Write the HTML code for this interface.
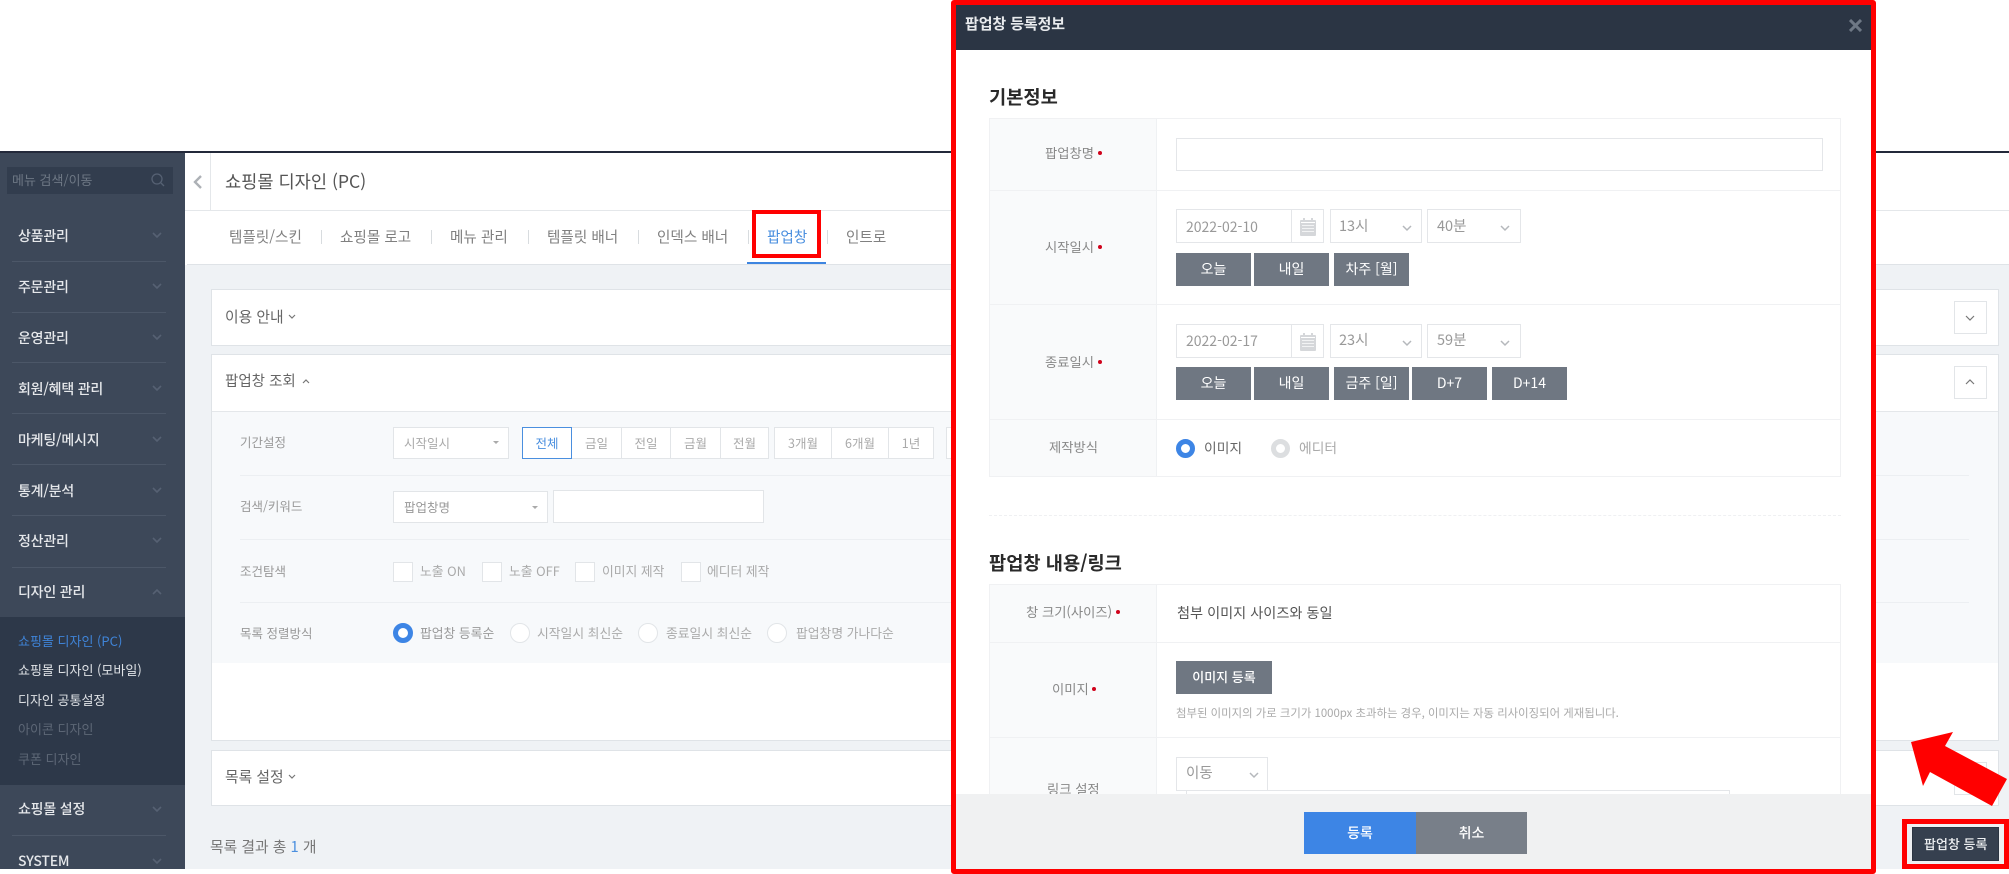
<!DOCTYPE html>
<html lang="ko"><head><meta charset="utf-8"><title>팝업창 등록정보</title>
<style>
*{box-sizing:border-box;margin:0;padding:0}
html,body{width:2009px;height:874px;background:#fff;overflow:hidden}
body{position:relative;font-family:"Liberation Sans","Noto Sans CJK KR",sans-serif;filter:blur(.35px)}
.k{font-family:"Noto Sans CJK KR","Liberation Sans",sans-serif}
div{position:absolute}
.t{position:absolute;white-space:nowrap;line-height:20px;height:20px;font-family:"Noto Sans CJK KR","Liberation Sans",sans-serif}
.m{color:#e6e8eb;font-size:14px;font-weight:500;left:18px;letter-spacing:-.2px}
.sep{left:12px;width:154px;height:1px;background:#4c5768}
.sub{color:#dfe2e6;font-size:13px;left:18px}
.tab{color:#808080;font-size:14.6px;top:227px}
.td{width:1px;height:14px;top:230px;background:#d8dcdf}
.pn{left:211px;width:1788px;background:#fff;border:1px solid #dfe3e7}
.lb{color:#999;font-size:12.5px;left:240px}
.box{background:#fff;border:1px solid #e2e5e8}
.sb{top:427px;height:32px;background:#fff;border:1px solid #e2e5e8;color:#aaa;font-size:12.5px;text-align:center;line-height:30px;font-family:"Noto Sans CJK KR",sans-serif}
.cb{width:20px;height:20px;background:#fff;border:1px solid #e2e5e8;top:562px}
.gt{color:#aaa;font-size:12.8px}
.rd{width:20px;height:20px;border-radius:50%;background:#fff;border:1px solid #e2e5e8;top:623px}
.ml{color:#888;font-size:13.3px;text-align:center}
.dot{width:4px;height:4px;border-radius:50%;background:#d0021b}
.ln{background:#f0f1f3;height:1px}
.gb{background:#6f7782;color:#fff;font-size:14px;text-align:center;line-height:32px;font-family:"Noto Sans CJK KR",sans-serif;height:33px;width:75px}
.sel{background:#fff;border:1px solid #e4e6e9}
.v{color:#999;font-size:14.5px}
</style></head><body>

<!-- top rule -->
<div style="left:0;top:151px;width:2009px;height:2px;background:#23293a"></div>

<!-- sidebar -->
<div style="left:0;top:153px;width:185px;height:716px;background:#3d4859"></div>
<div style="left:7px;top:167px;width:166px;height:27px;background:#323d4e"></div>
<span class="t" style="left:12px;top:170px;font-size:13px;color:#6d7784">메뉴 검색/이동</span>

<span class="t m" style="top:226px">상품관리</span><div class="sep" style="top:261px"></div>
<span class="t m" style="top:277px">주문관리</span><div class="sep" style="top:312px"></div>
<span class="t m" style="top:328px">운영관리</span><div class="sep" style="top:362px"></div>
<span class="t m" style="top:379px">회원/혜택 관리</span><div class="sep" style="top:413px"></div>
<span class="t m" style="top:430px">마케팅/메시지</span><div class="sep" style="top:464px"></div>
<span class="t m" style="top:481px">통계/분석</span><div class="sep" style="top:515px"></div>
<span class="t m" style="top:531px">정산관리</span><div class="sep" style="top:567px"></div>
<span class="t m" style="top:582px">디자인 관리</span>

<div style="left:0;top:617px;width:185px;height:168px;background:#2d3849"></div>
<span class="t sub" style="top:631px;color:#3f84d8">쇼핑몰 디자인 (PC)</span>
<span class="t sub" style="top:660px">쇼핑몰 디자인 (모바일)</span>
<span class="t sub" style="top:690px">디자인 공통설정</span>
<span class="t sub" style="top:719px;color:#5d6776">아이콘 디자인</span>
<span class="t sub" style="top:749px;color:#5d6776">쿠폰 디자인</span>

<span class="t m" style="top:799px">쇼핑몰 설정</span><div class="sep" style="top:835px"></div>
<span class="t m" style="top:851px">SYSTEM</span>

<!-- main bg -->
<div style="left:185px;top:153px;width:1824px;height:716px;background:#eff2f5"></div>
<div style="left:185px;top:153px;width:1824px;height:112px;background:#fff"></div>
<div style="left:185px;top:210px;width:1824px;height:1px;background:#e4e7ea"></div>
<div style="left:187px;top:264px;width:1822px;height:1px;background:#dfe3e7"></div>
<div style="left:210px;top:153px;width:1px;height:57px;background:#e4e7ea"></div>

<span class="t" style="left:225px;top:172px;font-size:17.6px;color:#555">쇼핑몰 디자인 (PC)</span>

<span class="t tab" style="left:229px">템플릿/스킨</span><div class="td" style="left:321px"></div>
<span class="t tab" style="left:340px">쇼핑몰 로고</span><div class="td" style="left:431px"></div>
<span class="t tab" style="left:450px">메뉴 관리</span><div class="td" style="left:528px"></div>
<span class="t tab" style="left:547px">템플릿 배너</span><div class="td" style="left:638px"></div>
<span class="t tab" style="left:657px">인덱스 배너</span><div class="td" style="left:748px"></div>
<span class="t tab" style="left:767px;color:#4a8fdf">팝업창</span><div class="td" style="left:827px"></div>
<span class="t tab" style="left:846px">인트로</span>
<div style="left:747px;top:262px;width:79px;height:2px;background:#3d85e0"></div>

<!-- panels -->
<div class="pn" style="top:289px;height:57px"></div>
<span class="t" style="left:225px;top:307px;font-size:14.8px;color:#666">이용 안내</span>
<div class="box" style="left:1954px;top:301px;width:33px;height:33px"></div>

<div class="pn" style="top:354px;height:387px"></div>
<span class="t" style="left:225px;top:371px;font-size:14.5px;color:#666">팝업창 조회</span>
<div class="box" style="left:1954px;top:366px;width:33px;height:33px"></div>
<div style="left:212px;top:411px;width:1786px;height:252px;background:#f7f9fb;border-top:1px solid #e4e7ea"></div>

<div class="ln" style="left:240px;top:475px;width:1729px;background:#eceff2"></div>
<div class="ln" style="left:240px;top:539px;width:1729px;background:#eceff2"></div>
<div class="ln" style="left:240px;top:602px;width:1729px;background:#eceff2"></div>

<span class="t lb" style="top:432px">기간설정</span>
<span class="t lb" style="top:496px">검색/키워드</span>
<span class="t lb" style="top:561px">조건탐색</span>
<span class="t lb" style="top:623px">목록 정렬방식</span>

<div class="sb" style="left:393px;width:116px;text-align:left;padding-left:10px">시작일시</div>
<div class="sb" style="left:522px;width:50px;border:1px solid #4a8fdf;color:#4a8fdf;z-index:1">전체</div>
<div class="sb" style="left:571px;width:51px">금일</div>
<div class="sb" style="left:621px;width:50px">전일</div>
<div class="sb" style="left:670px;width:51px">금월</div>
<div class="sb" style="left:720px;width:49px">전월</div>
<div class="sb" style="left:774px;width:58px">3개월</div>
<div class="sb" style="left:831px;width:58px">6개월</div>
<div class="sb" style="left:888px;width:46px">1년</div>
<div class="sb" style="left:946px;width:46px"></div>

<div class="sb" style="left:393px;top:491px;width:155px;text-align:left;padding-left:10px;color:#999">팝업창명</div>
<div class="box" style="left:553px;top:490px;width:211px;height:33px"></div>

<div class="cb" style="left:393px"></div><span class="t gt" style="left:420px;top:561px">노출 ON</span>
<div class="cb" style="left:482px"></div><span class="t gt" style="left:509px;top:561px">노출 OFF</span>
<div class="cb" style="left:575px"></div><span class="t gt" style="left:602px;top:561px">이미지 제작</span>
<div class="cb" style="left:681px"></div><span class="t gt" style="left:707px;top:561px">에디터 제작</span>

<div class="rd" style="left:393px;border:5px solid #3d85e5"></div><span class="t gt" style="left:420px;top:623px;color:#999">팝업창 등록순</span>
<div class="rd" style="left:510px"></div><span class="t gt" style="left:537px;top:623px">시작일시 최신순</span>
<div class="rd" style="left:638px"></div><span class="t gt" style="left:666px;top:623px">종료일시 최신순</span>
<div class="rd" style="left:767px"></div><span class="t gt" style="left:796px;top:623px">팝업창명 가나다순</span>

<div class="pn" style="top:750px;height:56px"></div>
<span class="t" style="left:225px;top:767px;font-size:14.8px;color:#666">목록 설정</span>
<div class="box" style="left:1954px;top:762px;width:33px;height:33px"></div>

<span class="t" style="left:210px;top:837px;font-size:14.8px;color:#777">목록 결과 총 <span style="color:#4a8fdf">1</span> 개</span>

<svg style="position:absolute;left:0;top:0" width="2009" height="874" fill="none">
<g stroke="#566173" stroke-width="1.6">
<path d="M153 233l4 4 4-4M153 284l4 4 4-4M153 335l4 4 4-4M153 386l4 4 4-4M153 437l4 4 4-4M153 488l4 4 4-4M153 538l4 4 4-4M153 594l4-4 4 4M153 807l4 4 4-4M153 859l4 4 4-4"/>
</g>
<circle cx="157" cy="179" r="5" stroke="#566173" stroke-width="1.3"/><path d="M161 183l3 3" stroke="#566173" stroke-width="1.3"/>
<path d="M201 176l-6 6 6 6" stroke="#adb1b6" stroke-width="2.4"/>
<g stroke="#777" stroke-width="1.2">
<path d="M289 315l3 3 3-3M303 383l3-3 3 3M289 775l3 3 3-3"/>
<path d="M1966 316l4 4 4-4M1966 384l4-4 4 4"/>
</g>
<path d="M493 441h6l-3 3zM532 506h6l-3 3z" fill="#aaa"/>
</svg>

<!-- popup register button -->
<div style="left:1902px;top:819px;width:107px;height:50px;background:#eef0f2;border:5px solid #f00"></div>
<div style="left:1912px;top:827px;width:87px;height:34px;background:#36404f;border:1px solid #2c3542"></div>
<span class="t" style="left:1924px;top:834px;font-size:13px;color:#eef0f2;font-weight:500">팝업창 등록</span>

<!-- red box on tab -->
<div style="left:752px;top:210px;width:69px;height:48px;border:4.5px solid #f00"></div>

<!-- arrow -->
<svg style="position:absolute;left:0;top:0" width="2009" height="874"><path d="M1911 742L1953 732L1945 746L2007 779L1992 806L1930 772L1923 786Z" fill="#f00"/></svg>

<!-- modal -->
<div style="left:951px;top:0;width:925px;height:874px;background:#fff;border:5px solid #f00;border-radius:3px;overflow:hidden"></div>
<div style="left:956px;top:5px;width:915px;height:45px;background:#2b3544"></div>
<span class="t" style="left:965px;top:14px;font-size:15px;font-weight:700;color:#e8eaed;letter-spacing:-.1px">팝업창 등록정보</span>
<svg style="position:absolute;left:1849px;top:19px" width="13" height="13"><path d="M1 1l11 11M12 1L1 12" stroke="#6e7885" stroke-width="3"/></svg>

<span class="t" style="left:989px;top:87px;font-size:18.7px;font-weight:700;color:#2a2a2a">기본정보</span>

<!-- table 1 -->
<div style="left:989px;top:118px;width:852px;height:359px;background:#fff;border:1px solid #f0f1f3"></div>
<div style="left:990px;top:119px;width:167px;height:357px;background:#f9fafb;border-right:1px solid #eff1f3"></div>
<div class="ln" style="left:990px;top:190px;width:850px"></div>
<div class="ln" style="left:990px;top:304px;width:850px"></div>
<div class="ln" style="left:990px;top:419px;width:850px"></div>

<span class="t ml" style="left:1045px;top:143px">팝업창명</span><div class="dot" style="left:1098px;top:151px"></div>
<div class="sel" style="left:1176px;top:138px;width:647px;height:33px"></div>

<span class="t ml" style="left:1045px;top:237px">시작일시</span><div class="dot" style="left:1098px;top:245px"></div>
<div class="sel" style="left:1176px;top:209px;width:148px;height:34px"></div>
<div style="left:1291px;top:209px;width:1px;height:34px;background:#e4e6e9"></div>
<span class="t v" style="left:1186px;top:217px;font-size:14px">2022-02-10</span>
<div class="sel" style="left:1330px;top:209px;width:92px;height:34px"></div><span class="t v" style="left:1339px;top:216px">13시</span>
<div class="sel" style="left:1427px;top:209px;width:94px;height:34px"></div><span class="t v" style="left:1437px;top:216px">40분</span>
<div class="gb" style="left:1176px;top:253px">오늘</div>
<div class="gb" style="left:1254px;top:253px">내일</div>
<div class="gb" style="left:1334px;top:253px">차주 [월]</div>

<span class="t ml" style="left:1045px;top:352px">종료일시</span><div class="dot" style="left:1098px;top:360px"></div>
<div class="sel" style="left:1176px;top:324px;width:148px;height:34px"></div>
<div style="left:1291px;top:324px;width:1px;height:34px;background:#e4e6e9"></div>
<span class="t v" style="left:1186px;top:331px;font-size:14px">2022-02-17</span>
<div class="sel" style="left:1330px;top:324px;width:92px;height:34px"></div><span class="t v" style="left:1339px;top:330px">23시</span>
<div class="sel" style="left:1427px;top:324px;width:94px;height:34px"></div><span class="t v" style="left:1437px;top:330px">59분</span>
<div class="gb" style="left:1176px;top:367px">오늘</div>
<div class="gb" style="left:1254px;top:367px">내일</div>
<div class="gb" style="left:1334px;top:367px">금주 [일]</div>
<div class="gb" style="left:1412px;top:367px">D+7</div>
<div class="gb" style="left:1492px;top:367px">D+14</div>

<span class="t ml" style="left:1049px;top:437px">제작방식</span>
<div style="left:1176px;top:439px;width:19px;height:19px;border-radius:50%;border:5px solid #3d85e5;background:#fff"></div>
<span class="t" style="left:1204px;top:437px;font-size:13.8px;color:#666">이미지</span>
<div style="left:1271px;top:439px;width:19px;height:19px;border-radius:50%;border:5px solid #dcdee0;background:#fff"></div>
<span class="t" style="left:1299px;top:437px;font-size:13.8px;color:#aaa">에디터</span>

<div style="left:989px;top:515px;width:852px;height:0;border-top:1px dashed #eff0f2"></div>

<span class="t" style="left:989px;top:553px;font-size:18.7px;font-weight:700;color:#2a2a2a">팝업창 내용/링크</span>

<!-- table 2 -->
<div style="left:989px;top:584px;width:852px;height:215px;background:#fff;border:1px solid #f0f1f3"></div>
<div style="left:990px;top:585px;width:167px;height:212px;background:#f9fafb;border-right:1px solid #eff1f3"></div>
<div class="ln" style="left:990px;top:642px;width:850px"></div>
<div class="ln" style="left:990px;top:737px;width:850px"></div>

<span class="t ml" style="left:1026px;top:602px">창 크기(사이즈)</span><div class="dot" style="left:1116px;top:610px"></div>
<span class="t" style="left:1177px;top:603px;font-size:14.2px;color:#555">첨부 이미지 사이즈와 동일</span>
<span class="t ml" style="left:1052px;top:679px">이미지</span><div class="dot" style="left:1092px;top:687px"></div>
<div class="gb" style="left:1176px;top:661px;width:96px;font-size:13px;font-weight:500">이미지 등록</div>
<span class="t" style="left:1176px;top:703px;font-size:11.4px;color:#aaa">첨부된 이미지의 가로 크기가 1000px 초과하는 경우, 이미지는 자동 리사이징되어 게재됩니다.</span>
<span class="t ml" style="left:1047px;top:779px">링크 설정</span>
<div class="sel" style="left:1176px;top:757px;width:92px;height:34px"></div><span class="t v" style="left:1186px;top:763px">이동</span>
<div style="left:1186px;top:790px;width:544px;height:10px;background:#fff;border:1px solid #e4e6e9"></div>

<!-- footer -->
<div style="left:956px;top:794px;width:915px;height:75px;background:#f0f1f2"></div>
<div style="left:1304px;top:812px;width:112px;height:42px;background:#3d85e5;color:#fff;font-size:14px;font-weight:500;text-align:center;line-height:42px;font-family:'Noto Sans CJK KR',sans-serif">등록</div>
<div style="left:1416px;top:812px;width:111px;height:42px;background:#787f89;color:#fff;font-size:14px;font-weight:500;text-align:center;line-height:42px;font-family:'Noto Sans CJK KR',sans-serif">취소</div>

<!-- modal icons -->
<svg style="position:absolute;left:0;top:0" width="2009" height="874" fill="none">
<g stroke="#b5b8bc" stroke-width="1.5">
<path d="M1403 226l4 4 4-4M1501 226l4 4 4-4M1403 341l4 4 4-4M1501 341l4 4 4-4M1250 773l4 4 4-4"/>
</g>
<g fill="#d5d7da" stroke="none">
<rect x="1300" y="220" width="16" height="16" rx="1"/>
<rect x="1303" y="218" width="2" height="3"/><rect x="1311" y="218" width="2" height="3"/>
<rect x="1301" y="222" width="14" height="1" fill="#fff"/>
<rect x="1302" y="225" width="12" height="1" fill="#f2f3f4"/><rect x="1302" y="228" width="12" height="1" fill="#f2f3f4"/><rect x="1302" y="231" width="12" height="1" fill="#f2f3f4"/>
</g>
<g fill="#d5d7da" stroke="none">
<rect x="1300" y="335" width="16" height="16" rx="1"/>
<rect x="1303" y="333" width="2" height="3"/><rect x="1311" y="333" width="2" height="3"/>
<rect x="1301" y="337" width="14" height="1" fill="#fff"/>
<rect x="1302" y="340" width="12" height="1" fill="#f2f3f4"/><rect x="1302" y="343" width="12" height="1" fill="#f2f3f4"/><rect x="1302" y="346" width="12" height="1" fill="#f2f3f4"/>
</g>
</svg>

</body></html>
